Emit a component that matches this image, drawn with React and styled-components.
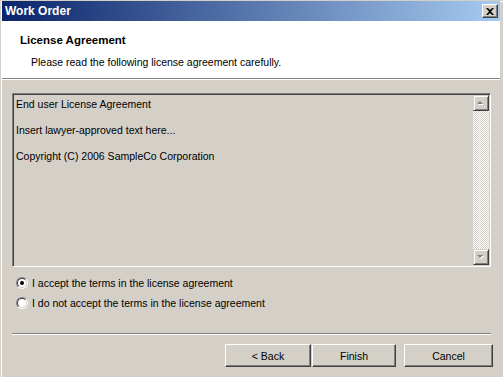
import React from 'react'
import styled, { createGlobalStyle } from 'styled-components'

const GlobalStyle = createGlobalStyle`
  html, body {
    margin: 0;
    padding: 0;
    background: #D4D0C8;
  }
  body {
    font-family: "Liberation Sans", Arial, sans-serif;
    font-size: 10.5px;
    color: #000;
  }
`

const Window = styled.div`
  width: 503px;
  height: 377px;
  box-sizing: border-box;
  padding: 1px 3px 0 2px;
  background: #D4D0C8;
  box-shadow: inset 1px 1px 0 #D4D0C8, inset 2px 2px 0 #fff;
  display: flex;
  flex-direction: column;
  overflow: hidden;
`

const TitleBar = styled.div`
  height: 20px;
  display: flex;
  align-items: center;
  justify-content: space-between;
  padding: 0 2px 0 3px;
  background: linear-gradient(to right, #0A246A, #A6CAF0);
`

const TitleText = styled.span`
  color: #fff;
  font-weight: bold;
  font-size: 12px;
`

const CaptionButton = styled.div`
  width: 16px;
  height: 14px;
  box-sizing: border-box;
  background: #D4D0C8;
  border: 1px solid;
  border-color: #fff #404040 #404040 #fff;
  box-shadow: inset -1px -1px 0 #808080;
  display: flex;
  align-items: center;
  justify-content: center;
`

const Header = styled.div`
  height: 58px;
  box-sizing: border-box;
  background: #fff;
  padding: 12px 0 0 18px;
  border-bottom: 1px solid #808080;
  box-shadow: 0 1px 0 #fff;
  margin-bottom: 1px;
`

const HeaderTitle = styled.div`
  font-weight: bold;
  font-size: 11.5px;
  line-height: 14px;
`

const HeaderSub = styled.div`
  line-height: 13px;
  margin: 9px 0 0 11px;
`

const Body = styled.div`
  flex: 1;
  display: flex;
  flex-direction: column;
  padding: 13px 9px 0 10px;
`

const TextBox = styled.div`
  height: 174px;
  box-sizing: border-box;
  border: 1px solid;
  border-color: #808080 #fff #fff #808080;
  box-shadow: inset 1px 1px 0 #404040, inset -1px -1px 0 #D4D0C8;
  padding: 1px;
  display: flex;
`

const TextArea = styled.div`
  flex: 1;
  padding: 3px 0 0 2px;
  line-height: 13px;

  p {
    margin: 0 0 13px;
  }
`

const ScrollBar = styled.div`
  width: 16px;
  display: flex;
  flex-direction: column;
  justify-content: space-between;
  background-color: #fff;
  background-image: conic-gradient(#fff 25%, #D4D0C8 0 50%, #fff 0 75%, #D4D0C8 0);
  background-size: 2px 2px;
`

const ScrollButton = styled.div`
  width: 16px;
  height: 16px;
  box-sizing: border-box;
  background: #D4D0C8;
  border: 1px solid;
  border-color: #D4D0C8 #404040 #404040 #D4D0C8;
  box-shadow: inset 1px 1px 0 #fff, inset -1px -1px 0 #808080;
  display: flex;
  align-items: center;
  justify-content: center;
`

const Options = styled.div`
  margin-top: 6px;
  padding-left: 4px;
`

const OptionRow = styled.label`
  height: 20px;
  display: flex;
  align-items: center;
  gap: 4px;
`

const RadioOuter = styled.span`
  width: 12px;
  height: 12px;
  box-sizing: border-box;
  border-radius: 50%;
  border: 1px solid;
  border-color: #808080 #fff #fff #808080;
  display: flex;
`

const RadioInner = styled.span`
  flex: 1;
  border-radius: 50%;
  border: 1px solid;
  border-color: #404040 #D4D0C8 #D4D0C8 #404040;
  background: #fff;
  display: flex;
  align-items: center;
  justify-content: center;

  &::after {
    content: '';
    width: 4px;
    height: 4px;
    border-radius: 50%;
    background: ${({ $checked }) => ($checked ? '#000' : 'transparent')};
  }
`

const Separator = styled.div`
  margin-top: 20px;
  height: 1px;
  background: #808080;
  border-bottom: 1px solid #fff;
`

const ButtonRow = styled.div`
  display: flex;
  justify-content: flex-end;
  margin: 9px -2px 0 0;
`

const PushButton = styled.div`
  width: ${({ $w }) => $w}px;
  height: 23px;
  box-sizing: border-box;
  margin-left: ${({ $gap }) => $gap}px;
  border: 1px solid;
  border-color: #fff #404040 #404040 #fff;
  box-shadow: inset -1px -1px 0 #808080;
  background: #D4D0C8;
  display: flex;
  align-items: center;
  justify-content: center;
`

function Arrow({ down }) {
  const pts = down ? '0,0 6,0 3,3' : '3,0 6,3 0,3'
  return (
    <svg width="8" height="5" viewBox="0 0 8 5">
      <polygon points={pts} fill="#fff" transform="translate(1,1)" />
      <polygon points={pts} fill="#808080" />
    </svg>
  )
}

function Radio({ checked, children }) {
  return (
    <OptionRow>
      <RadioOuter>
        <RadioInner $checked={checked} />
      </RadioOuter>
      {children}
    </OptionRow>
  )
}

export default function App() {
  return (
    <>
      <GlobalStyle />
      <Window>
        <TitleBar>
          <TitleText>Work Order</TitleText>
          <CaptionButton>
            <svg width="8" height="7" viewBox="0 0 8 7">
              <path d="M0 0h2l2 2 2-2h2L5 3.5 8 7H6L4 5 2 7H0l3-3.5z" fill="#000" />
            </svg>
          </CaptionButton>
        </TitleBar>

        <Header>
          <HeaderTitle>License Agreement</HeaderTitle>
          <HeaderSub>Please read the following license agreement carefully.</HeaderSub>
        </Header>

        <Body>
          <TextBox>
            <TextArea>
              <p>End user License Agreement</p>
              <p>Insert lawyer-approved text here...</p>
              <p>Copyright (C) 2006 SampleCo Corporation</p>
            </TextArea>
            <ScrollBar>
              <ScrollButton><Arrow /></ScrollButton>
              <ScrollButton><Arrow down /></ScrollButton>
            </ScrollBar>
          </TextBox>

          <Options>
            <Radio checked>I accept the terms in the license agreement</Radio>
            <Radio>I do not accept the terms in the license agreement</Radio>
          </Options>

          <Separator />

          <ButtonRow>
            <PushButton $w={86} $gap={0}>&lt; Back</PushButton>
            <PushButton $w={84} $gap={1}>Finish</PushButton>
            <PushButton $w={89} $gap={8}>Cancel</PushButton>
          </ButtonRow>
        </Body>
      </Window>
    </>
  )
}
